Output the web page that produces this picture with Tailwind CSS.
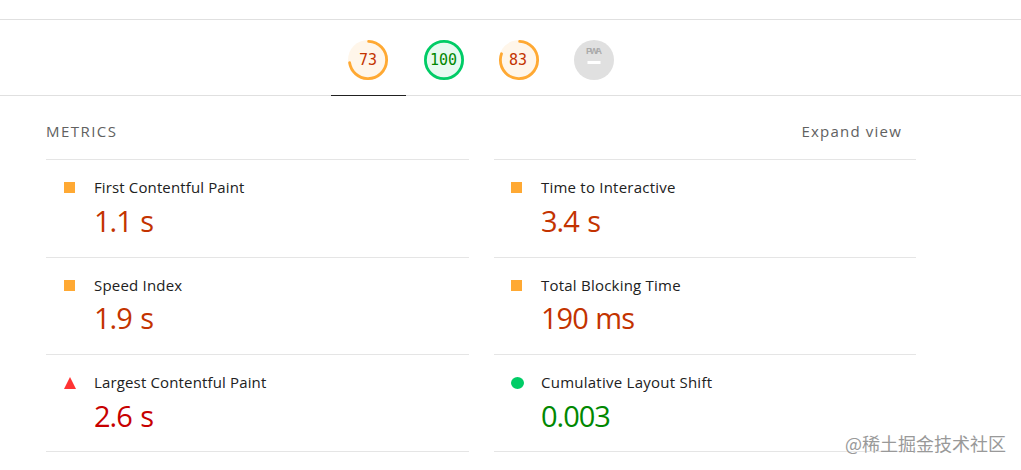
<!DOCTYPE html>
<html lang="en">
<head>
    <meta charset="UTF-8">
    <meta name="viewport" content="width=device-width, initial-scale=1.0">
    <title>Lighthouse Report</title>
    <script src="https://cdn.jsdelivr.net/npm/@tailwindcss/browser@4"></script>
</head>
<body class="bg-white h-[470px] overflow-hidden font-['Open_Sans','Noto_Sans_CJK_SC',sans-serif] text-[#212121]">
    <!-- Sticky score header -->
    <header class="mt-[19px] h-[77px] border-y border-[#e0e0e0] flex pl-[331px]">
        <a class="w-[75px] h-[76px] flex justify-center pt-5 pr-px border-b border-[#212121]">
            <svg class="w-10 h-10" viewBox="0 0 40 40">
                <circle cx="20" cy="20" r="20" fill="#fff6ea"/>
                <circle cx="20" cy="20" r="18.6" fill="none" stroke="#ffa933" stroke-width="2.8" stroke-linecap="round" pathLength="100" stroke-dasharray="72 100" transform="rotate(-88 20 20)"/>
                <text x="20" y="25.3" text-anchor="middle" class="font-['DejaVu_Sans_Mono',monospace] text-[15px] fill-[#c33300]">73</text>
            </svg>
        </a>
        <a class="w-[76px] h-[76px] flex justify-center pt-5">
            <svg class="w-10 h-10" viewBox="0 0 40 40">
                <circle cx="20" cy="20" r="20" fill="#e6faf0"/>
                <circle cx="20" cy="20" r="18.6" fill="none" stroke="#00cc66" stroke-width="2.8"/>
                <text x="19.5" y="25.3" text-anchor="middle" class="font-['DejaVu_Sans_Mono',monospace] text-[15px] fill-[#018801]">100</text>
            </svg>
        </a>
        <a class="w-[74px] h-[76px] flex justify-center pt-5">
            <svg class="w-10 h-10" viewBox="0 0 40 40">
                <circle cx="20" cy="20" r="20" fill="#fff6ea"/>
                <circle cx="20" cy="20" r="18.6" fill="none" stroke="#ffa933" stroke-width="2.8" stroke-linecap="round" pathLength="100" stroke-dasharray="80 100" transform="rotate(-88 20 20)"/>
                <text x="19" y="25.3" text-anchor="middle" class="font-['DejaVu_Sans_Mono',monospace] text-[15px] fill-[#c33300]">83</text>
            </svg>
        </a>
        <a class="w-[76px] h-[76px] flex justify-center pt-5">
            <svg class="w-10 h-10" viewBox="0 0 40 40">
                <circle cx="20" cy="20" r="20" fill="#e0e0e0"/>
                <text x="20" y="14.4" text-anchor="middle" textLength="16" lengthAdjust="spacing" class="font-['Liberation_Sans',sans-serif] text-[9px] font-bold fill-[#aaa]">PWA</text>
                <rect x="13.5" y="21" width="13" height="3" fill="#fff"/>
            </svg>
        </a>
    </header>

    <!-- Metrics -->
    <main class="pl-[46px] w-[916px]">
        <div class="h-[63px] pt-[23px] pr-3.5 flex justify-between text-[15px] leading-6 text-[#616161]">
            <span class="tracking-[1.45px]">METRICS</span>
            <span class="tracking-[1.2px]">Expand view</span>
        </div>
        <div class="grid grid-cols-[423px_422px] gap-x-[25px] grid-rows-[98px_97px_98px]">
            <div class="border-t border-[#e5e5e5] flex pl-[18px] pt-[15px]">
                <span class="w-[11px] h-[11px] mt-[7px] mr-[19px] bg-[#ffa933]"></span>
                <div>
                    <div class="text-[15px] leading-6 tracking-[0.13px]">First Contentful Paint</div>
                    <div class="text-[29px] leading-[43px] tracking-[-1px] [word-spacing:2px] text-[#c33300]">1.1 s</div>
                </div>
            </div>
            <div class="border-t border-[#e5e5e5] flex pl-[17px] pt-[15px]">
                <span class="w-[11px] h-[11px] mt-[7px] mr-[19px] bg-[#ffa933]"></span>
                <div>
                    <div class="text-[15px] leading-6 tracking-[0.22px]">Time to Interactive</div>
                    <div class="text-[29px] leading-[43px] tracking-[-1px] [word-spacing:2px] text-[#c33300]">3.4 s</div>
                </div>
            </div>
            <div class="border-t border-[#e5e5e5] flex pl-[18px] pt-[15px]">
                <span class="w-[11px] h-[11px] mt-[7px] mr-[19px] bg-[#ffa933]"></span>
                <div>
                    <div class="text-[15px] leading-6 tracking-[0.2px]">Speed Index</div>
                    <div class="text-[29px] leading-[41px] tracking-[-1px] [word-spacing:2px] text-[#c33300]">1.9 s</div>
                </div>
            </div>
            <div class="border-t border-[#e5e5e5] flex pl-[17px] pt-[15px]">
                <span class="w-[11px] h-[11px] mt-[7px] mr-[19px] bg-[#ffa933]"></span>
                <div>
                    <div class="text-[15px] leading-6 tracking-[0.22px]">Total Blocking Time</div>
                    <div class="text-[29px] leading-[41px] tracking-[-1px] [word-spacing:1px] text-[#c33300]">190 ms</div>
                </div>
            </div>
            <div class="border-y border-[#e5e5e5] flex pl-[18px] pt-[15px]">
                <svg class="w-3 h-3 mt-[7px] mr-[18px]" viewBox="0 0 12 12"><path d="M6 0l6 12H0z" fill="#ff3333"/></svg>
                <div>
                    <div class="text-[15px] leading-6 tracking-[0.15px]">Largest Contentful Paint</div>
                    <div class="text-[29px] leading-[43px] tracking-[-1px] [word-spacing:2px] text-[#c70000]">2.6 s</div>
                </div>
            </div>
            <div class="border-y border-[#e5e5e5] flex pl-[17px] pt-[15px]">
                <svg class="w-[13px] h-3 mt-[7px] mr-[17px]" viewBox="0 0 13 12"><ellipse cx="6.5" cy="6" rx="6.5" ry="6" fill="#00cc66"/></svg>
                <div>
                    <div class="text-[15px] leading-6 tracking-[0.25px]">Cumulative Layout Shift</div>
                    <div class="text-[29px] leading-[43px] tracking-[-1px] text-[#018801]">0.003</div>
                </div>
            </div>
        </div>
    </main>

    <!-- Watermark -->
    <div class="absolute left-[845px] top-[431px] text-[18px] leading-6 whitespace-nowrap text-[#999] [text-shadow:0_0_2px_#fff] font-['Noto_Sans_CJK_SC',sans-serif]">@稀土掘金技术社区</div>
</body>
</html>
